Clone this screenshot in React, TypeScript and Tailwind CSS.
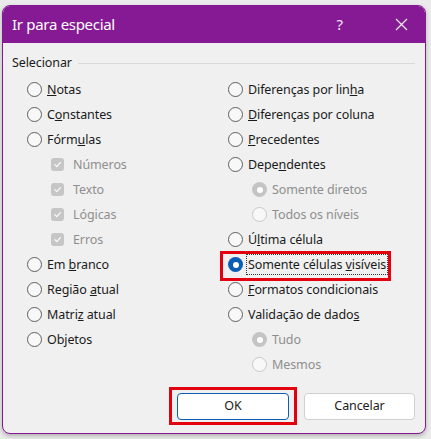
import type { ReactNode } from "react";

/* ─── Controls ─────────────────────────────────────────────── */
function RadioDot({ checked = false, disabled = false }: { checked?: boolean; disabled?: boolean }) {
  if (checked) {
    return (
      <span
        className={`flex h-[15px] w-[15px] shrink-0 items-center justify-center rounded-full ${
          disabled ? "bg-[#c4c4c4]" : "bg-[#0a5fb4]"
        }`}
      >
        <span className="h-[6px] w-[6px] rounded-full bg-white" />
      </span>
    );
  }
  return (
    <span
      className={`h-[15px] w-[15px] shrink-0 rounded-full border bg-[#f8f8f8] ${
        disabled ? "border-[#c8c8c8]" : "border-[#5f5f5f]"
      }`}
    />
  );
}

function CheckDot() {
  return (
    <span className="flex h-[13px] w-[13px] shrink-0 items-center justify-center rounded-[3px] bg-[#c6c6c6]">
      <svg width="9" height="9" viewBox="0 0 10 10" fill="none">
        <path d="M2 5.2 L4.2 7.3 L8.2 2.8" stroke="white" strokeWidth="1.2" strokeLinecap="round" strokeLinejoin="round" />
      </svg>
    </span>
  );
}

function Row({
  children,
  indent = false,
  kind = "radio",
  checked = false,
  disabled = false,
  focus = false,
}: {
  children: ReactNode;
  indent?: boolean;
  kind?: "radio" | "check";
  checked?: boolean;
  disabled?: boolean;
  focus?: boolean;
}) {
  return (
    <div className={`flex h-[25px] items-center ${indent ? "pl-[24px]" : ""}`}>
      {kind === "radio" ? <RadioDot checked={checked} disabled={disabled} /> : <CheckDot />}
      <span
        className={`ml-[4px] whitespace-nowrap px-[1px] leading-[19px] ${
          disabled ? "text-[#8e8e8e]" : "text-[#1b1b1b]"
        } ${focus ? "outline-1 outline-dotted outline-[#333]" : ""} ${kind === "check" ? "ml-[8px]" : ""}`}
      >
        {children}
      </span>
    </div>
  );
}

/* ─── Dialog ───────────────────────────────────────────────── */
export default function App() {
  return (
    <div
      className="h-[439px] w-[431px] bg-[#ebebeb] pl-[2px] pt-[5px]"
      style={{ fontFamily: '"Noto Sans", "Open Sans", sans-serif' }}
    >
      <div className="flex h-[429px] w-[424px] flex-col overflow-hidden rounded-[8px] border border-[#861a95] bg-[#f0f0f0] shadow-[0_2px_4px_rgba(0,0,0,0.25)]">
        {/* Title bar */}
        <div className="flex h-[37px] shrink-0 items-center bg-[#861a95] pl-[9px] text-white">
          <span className="text-[15px] tracking-[-0.3px]">Ir para especial</span>
          <span className="ml-auto mr-[52px] text-[15px] text-[#f3e6f5]">?</span>
          <svg className="mr-[17px]" width="13" height="13" viewBox="0 0 13 13" fill="none">
            <path d="M1 1 L12 12 M12 1 L1 12" stroke="#f6ecf7" strokeWidth="1.2" />
          </svg>
        </div>

        {/* Body */}
        <div className="flex flex-1 flex-col px-[9px] pt-[10px] text-[12.5px] tracking-[-0.1px]">
          <div className="flex h-[20px] items-center">
            <span className="text-[#1b1b1b]">Selecionar</span>
            <span className="ml-[6px] mr-[1px] h-px flex-1 bg-[#d9d9d9]" />
          </div>

          <div className="mt-[4px] flex">
            {/* Left column */}
            <div className="w-[216px] pl-[15px]">
              <Row><u>N</u>otas</Row>
              <Row>C<u>o</u>nstantes</Row>
              <Row>Fórm<u>u</u>las</Row>
              <Row indent kind="check" disabled>Números</Row>
              <Row indent kind="check" disabled>Texto</Row>
              <Row indent kind="check" disabled>Lógicas</Row>
              <Row indent kind="check" disabled>Erros</Row>
              <Row>Em <u>b</u>ranco</Row>
              <Row>Região <u>a</u>tual</Row>
              <Row>Matri<u>z</u> atual</Row>
              <Row>Ob<u>j</u>etos</Row>
            </div>

            {/* Right column */}
            <div className="flex-1">
              <Row>Diferenças por lin<u>h</u>a</Row>
              <Row><u>D</u>iferenças por coluna</Row>
              <Row><u>P</u>recedentes</Row>
              <Row>Depe<u>n</u>dentes</Row>
              <Row indent checked disabled>Somente diretos</Row>
              <Row indent disabled>Todos os níveis</Row>
              <Row>Ú<u>l</u>tima célula</Row>
              <div className="relative">
                <Row checked focus>Somente células <u>v</u>isíveis</Row>
                <span className="pointer-events-none absolute -top-[1px] -left-[8px] h-[30px] w-[171px] border-[3px] border-[#e3000f]" />
              </div>
              <Row><u>F</u>ormatos condicionais</Row>
              <Row>Validação de dado<u>s</u></Row>
              <Row indent checked disabled>Tudo</Row>
              <Row indent disabled>Mesmos</Row>
            </div>
          </div>

          {/* Buttons */}
          <div className="mt-[16px] flex justify-end gap-[15px] pr-[1px]">
            <div className="relative">
              <button className="h-[27px] w-[112px] rounded-[4px] border border-[#0a5fb4] bg-white text-[12.5px] text-[#1b1b1b]">
                OK
              </button>
              <span className="pointer-events-none absolute -top-[6px] -left-[8px] h-[38px] w-[128px] border-[3px] border-[#e3000f]" />
            </div>
            <button className="h-[27px] w-[111px] rounded-[4px] border border-[#d0d0d0] bg-white text-[12.5px] text-[#1b1b1b]">
              Cancelar
            </button>
          </div>
        </div>
      </div>
    </div>
  );
}
